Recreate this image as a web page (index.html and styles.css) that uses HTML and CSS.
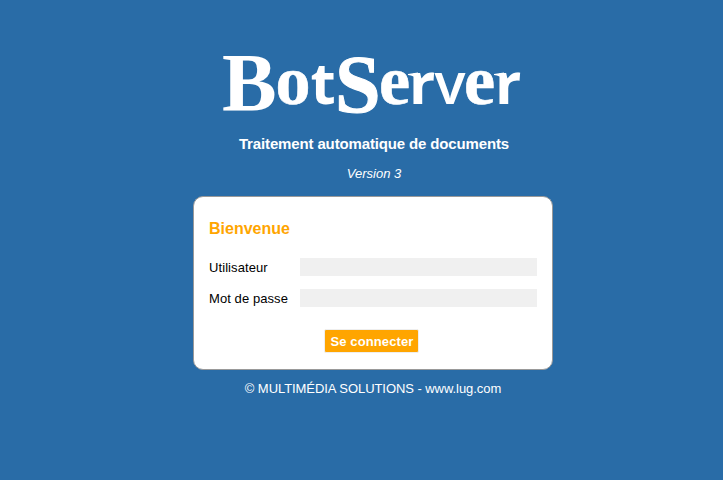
FILE: index.html
```html
<!DOCTYPE html>
<html lang="fr">
<head>
<meta charset="utf-8">
<title>BotServer</title>
<link rel="stylesheet" href="styles.css">
</head>
<body>
<main class="login">
  <svg class="logo" viewBox="0 0 360 70" width="360" height="70">
    <text class="logo-text" y="58"><tspan class="cap-b" x="29" y="63.500">B</tspan><tspan class="round" x="82.500" y="58">o</tspan><tspan class="sans" x="117.500" y="58">t</tspan><tspan class="cap-s" x="142" y="65.500">S</tspan><tspan class="round" x="186" y="58">e</tspan><tspan class="sans" x="216" y="58">r</tspan><tspan class="sans-v" x="241.500" y="58">v</tspan><tspan class="round" x="271" y="58">e</tspan><tspan class="sans" x="302" y="58">r</tspan></text>
    <path class="flag" d="M215 28l10-1.500v7q-4-4-10-4.500zM301 28l10-1.500v7q-4-4-10-4.500z"/>
  </svg>
  <h1 class="tagline">Traitement automatique de documents</h1>
  <p class="version">Version 3</p>
  <form class="card">
    <h2 class="welcome">Bienvenue</h2>
    <div class="row"><label for="user">Utilisateur</label><input id="user" type="text"></div>
    <div class="row"><label for="pass">Mot de passe</label><input id="pass" type="password"></div>
    <button class="submit" type="button">Se connecter</button>
  </form>
  <footer class="footer">© MULTIMÉDIA SOLUTIONS - www.lug.com</footer>
</main>
</body>
</html>
```
FILE: styles.css
```css
* { box-sizing: border-box; }
body {
  margin: 0;
  background: #296ca7;
  font-family: "Liberation Sans", Arial, sans-serif;
  font-size: 13px;
  color: #fff;
}
.login {
  width: 360px;
  margin: 46px 0 0 193px;
  display: flex;
  flex-direction: column;
}
.logo { display: block; overflow: visible; }
.logo-text {
  font-family: "Liberation Serif", serif;
  font-weight: bold;
  font-size: 70px;
  fill: #fff;
}
.cap-b { font-size: 82px; }
.cap-s { font-size: 82px; stroke: #fff; stroke-width: 1px; }
.round { stroke: #fff; stroke-width: .6px; }
.sans { font-family: "Open Sans", sans-serif; font-size: 58px; }
.sans-v { font-family: "Open Sans", sans-serif; font-size: 58px; font-weight: 600; }
.flag { fill: #fff; }
.tagline {
  margin: 19px 0 0 2px;
  font-size: 15px;
  line-height: 18px;
  letter-spacing: -.14px;
  text-align: center;
}
.version {
  margin: 13px 0 0 2px;
  font-style: italic;
  line-height: 16px;
  text-align: center;
}
.card {
  height: 174px;
  margin-top: 14px;
  padding: 22px 15px 0;
  display: flex;
  flex-direction: column;
  background: #fff;
  border: 1px solid #999;
  border-radius: 10px;
  color: #000;
}
.welcome {
  margin: 0 0 20px;
  font-size: 16px;
  line-height: 19px;
  color: #ffa500;
}
.row {
  display: flex;
  align-items: center;
  height: 18px;
  margin-bottom: 13px;
}
.row label { width: 91px; letter-spacing: .08px; }
.row input {
  width: 237px;
  height: 18px;
  padding: 0 2px;
  border: 0;
  background: #f0f0f0;
}
.submit {
  align-self: center;
  width: 95px;
  height: 24px;
  margin: 9px 3px 0 0;
  padding: 0 0 0 1px;
  border: 1px solid #eee;
  border-radius: 2px;
  background: #ffa500;
  color: #fff;
  font: bold 13px "Liberation Sans", Arial, sans-serif;
  letter-spacing: .12px;
}
.footer {
  margin-top: 10px;
  line-height: 17px;
  letter-spacing: -.06px;
  text-align: center;
}
```
